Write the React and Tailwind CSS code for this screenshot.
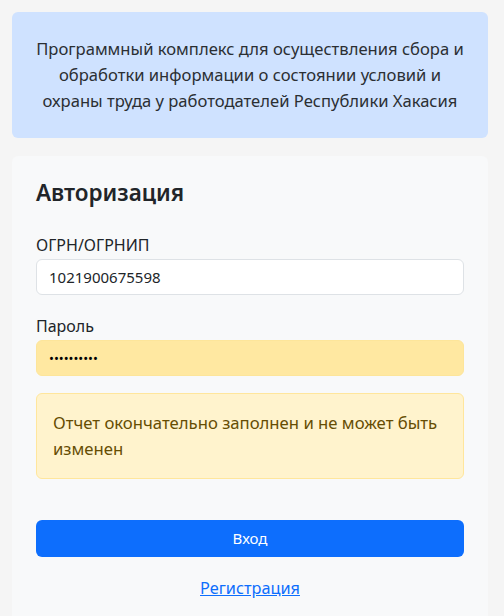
const FONT = { fontFamily: '"Noto Sans", "Open Sans", sans-serif' };

export default function App() {
    return (
        <div className="min-h-screen bg-[#f5f5f5] pl-3 pr-4 pt-3 text-[#212529]" style={FONT}>

            {/* Header banner */}
            <div className="rounded-md bg-[#cfe2ff] px-5 py-6 text-center text-[16.6px] leading-[26px] text-[#2b2f33]">
                Программный комплекс для осуществления сбора и обработки информации о состоянии условий и охраны труда у работодателей Республики Хакасия
            </div>

            {/* Login card */}
            <div className="mt-[18px] rounded-md bg-[#f8f9fa] px-6 pt-6 pb-6">
                <h2 className="text-[22.5px] font-semibold leading-[26px] text-[#212529]">Авторизация</h2>

                <div className="mt-[27px]">
                    <label className="block text-[16px] leading-6 mb-[2px]">ОГРН/ОГРНИП</label>
                    <input
                        type="text"
                        readOnly
                        defaultValue="1021900675598"
                        className="block h-9 w-full rounded-md border border-[#dee2e6] bg-white px-3 text-[15px] text-[#212529] outline-none"
                        style={FONT}
                    />
                </div>

                <div className="mt-[19px]">
                    <label className="block text-[16px] leading-6 mb-[2px]">Пароль</label>
                    <input
                        type="password"
                        readOnly
                        defaultValue="1234567890"
                        className="block h-9 w-full rounded-md border border-[#fde59a] bg-[#ffe8a1] px-3 text-[13px] text-black outline-none"
                        style={FONT}
                    />
                </div>

                <div className="mt-[17px] rounded-md border border-[#ffe69c] bg-[#fff3cd] px-4 py-4 text-[16.7px] leading-[26px] text-[#664d03]">
                    Отчет окончательно заполнен и не может быть изменен
                </div>

                <button className="mt-[41px] block h-[37px] w-full rounded-md bg-[#0d6efd] text-[15px] text-white">
                    Вход
                </button>

                <div className="mt-[19px] text-center">
                    <a href="#" className="text-[16.3px] text-[#0d6efd] underline">Регистрация</a>
                </div>
            </div>
        </div>
    );
}
